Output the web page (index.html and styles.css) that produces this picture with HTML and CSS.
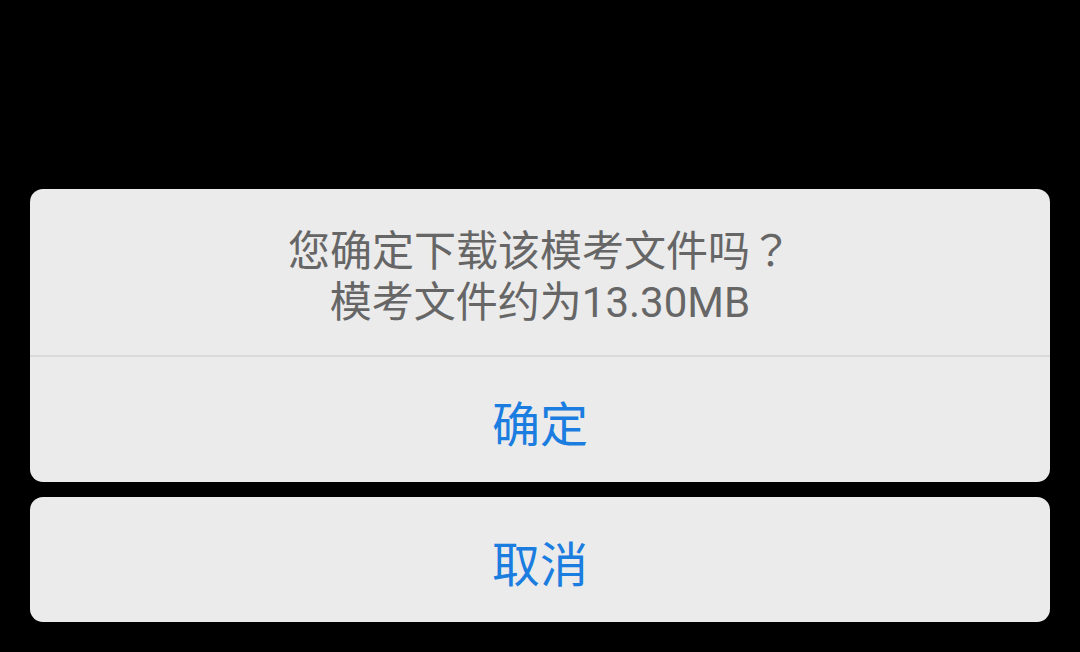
FILE: index.html
```html
<!DOCTYPE html>
<html lang="zh-CN">
<head>
<meta charset="utf-8">
<link rel="stylesheet" href="styles.css">
</head>
<body>
<div class="sheet">
  <div class="card">
    <div class="message"><p class="text">您确定下载该模考文件吗<span class="cjk" lang="zh-TW">？</span><br>模考文件约为13.30MB</p></div>
    <div class="divider"></div>
    <div class="action">确定</div>
  </div>
  <div class="card">
    <div class="action">取消</div>
  </div>
</div>
</body>
</html>
```
FILE: styles.css
```css
html, body {
  margin: 0;
  padding: 0;
  background: #000;
  width: 1080px;
  height: 652px;
  overflow: hidden;
}
.sheet {
  box-sizing: border-box;
  height: 652px;
  padding: 0 30px 30px;
  display: flex;
  flex-direction: column;
  justify-content: flex-end;
  gap: 15px;
  font-family: Roboto, "Noto Sans CJK SC", sans-serif;
}
.card {
  background: #ebebeb;
  border-radius: 13px;
  overflow: hidden;
}
.message {
  box-sizing: border-box;
  height: 166px;
  padding-top: 5px;
  display: flex;
  align-items: center;
  justify-content: center;
}
.text {
  margin: 0;
  text-align: center;
  font-size: 42px;
  line-height: 51px;
  color: #666666;
}
.cjk {
  font-family: "Noto Sans CJK TC", sans-serif;
}
.divider {
  height: 2px;
  background: #d9d9d9;
}
.action {
  box-sizing: border-box;
  height: 125px;
  padding-top: 2px;
  display: flex;
  align-items: center;
  justify-content: center;
  font-size: 48px;
  color: #1a7ddf;
}
```
